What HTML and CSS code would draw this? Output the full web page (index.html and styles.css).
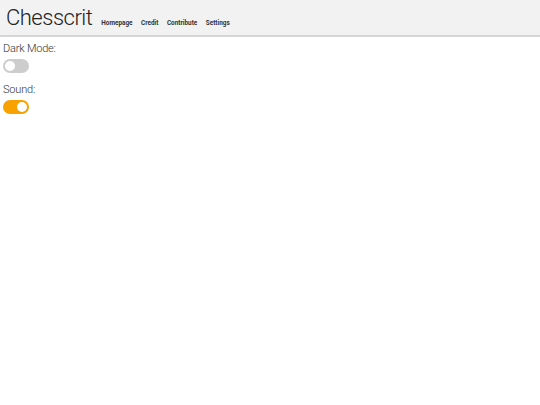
FILE: index.html
```html
<!DOCTYPE html>
<html lang="en">
<head>
  <meta charset="UTF-8">
  <meta name="viewport" content="width=device-width, initial-scale=1.0">
  <title>Chesscrit - Settings</title>
  <link rel="stylesheet" href="styles.css">
</head>
<body>
  <header class="topbar">
    <span class="brand">Chesscrit</span>
    <nav class="nav">
      <a href="#">Homepage</a>
      <a href="#">Credit</a>
      <a href="#">Contribute</a>
      <a href="#">Settings</a>
    </nav>
  </header>

  <main class="settings">
    <div class="setting">
      <label for="darkMode">Dark Mode:</label>
      <label class="switch">
        <input type="checkbox" id="darkMode">
        <span class="slider"></span>
      </label>
    </div>
    <div class="setting">
      <label for="sound">Sound:</label>
      <label class="switch">
        <input type="checkbox" id="sound" checked>
        <span class="slider"></span>
      </label>
    </div>
  </main>
</body>
</html>
```

FILE: styles.css
```css
body {
  margin: 0;
  font-family: Roboto, "Noto Sans", sans-serif;
  background-color: #fff;
  color: #333;
}
.topbar {
  display: flex;
  align-items: baseline;
  background-color: #f2f2f2;
  height: 35px;
  padding: 0 6px;
  border-bottom: 2px solid #d6d6d6;
  box-sizing: content-box;
}
.brand {
  font-size: 22px;
  font-weight: 300;
  letter-spacing: -0.5px;
  line-height: 35px;
  color: #222;
}
.nav {
  display: flex;
  gap: 8.5px;
  margin-left: 9px;
}
.nav a {
  font-size: 6.4px;
  font-weight: 700;
  color: #333;
  text-decoration: none;
}
.settings {
  padding: 4px 3px;
}
.setting {
  display: flex;
  flex-direction: column;
  align-items: flex-start;
  margin-bottom: 9px;
}
.setting > label:first-child {
  font-size: 11px;
  font-weight: 300;
  letter-spacing: -0.2px;
  color: #333;
  line-height: 16px;
  margin-bottom: 2px;
}
.switch {
  position: relative;
  display: inline-block;
  width: 26px;
  height: 14px;
}
.switch input {
  opacity: 0;
  width: 0;
  height: 0;
}
.slider {
  position: absolute;
  inset: 0;
  background-color: #cdcdcd;
  border-radius: 7px;
  cursor: pointer;
}
.slider::before {
  content: "";
  position: absolute;
  width: 10px;
  height: 10px;
  left: 2px;
  top: 2px;
  background-color: #fff;
  border-radius: 50%;
}
input:checked + .slider {
  background-color: #f7a200;
}
input:checked + .slider::before {
  transform: translateX(12px);
}
```
